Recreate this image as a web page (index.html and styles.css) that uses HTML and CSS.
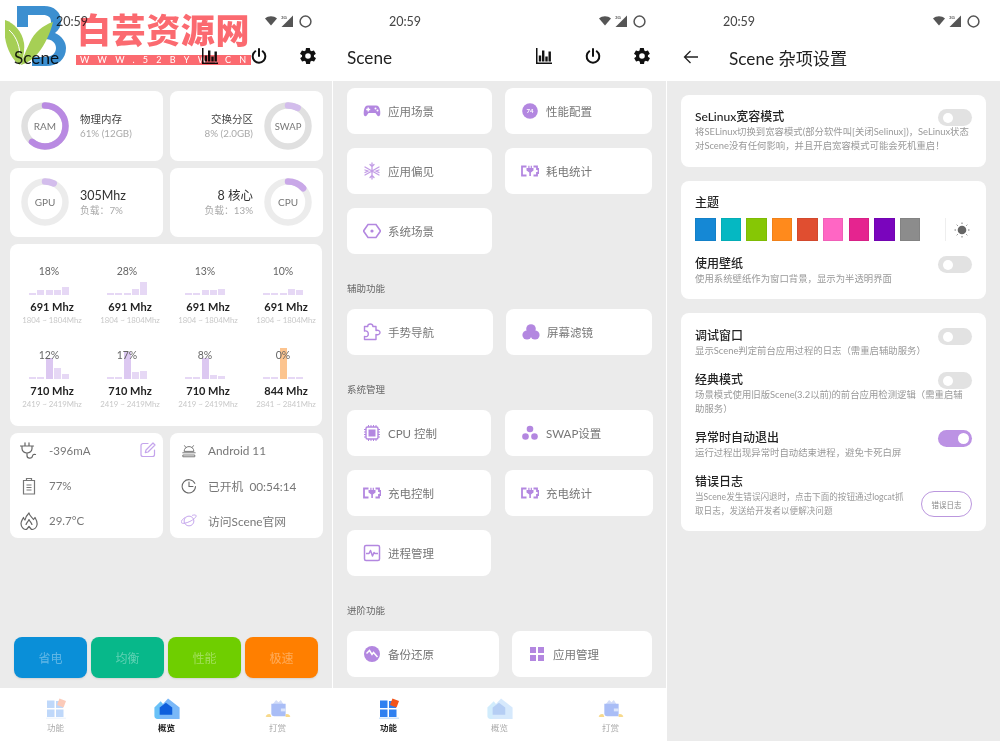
FILE: index.html
```html
<!DOCTYPE html>
<html>
  <head>
    <meta charset="utf-8">
    <title>Scene</title>
    <link rel="stylesheet" href="styles.css">
  </head>
  <body>
    <!-- shared icons -->
    <svg class="defs" width="0" height="0">
      <symbol id="i-wifi" viewBox="0 0 12 10"><path d="M0 2.6C3.4-.4 8.6-.4 12 2.6L6 9.6z" fill="#555"/></symbol>
      <symbol id="i-batt" viewBox="0 0 12 12"><circle cx="6" cy="6" r="5" fill="none" stroke="#555" stroke-width="1.4"/></symbol>
      <symbol id="i-bars" viewBox="0 0 16 16"><path d="M0 0h1.5v14.5H16V16H0z" fill="#111"/><path d="M2.8 7.5h2.4v6H2.8zM6 2.5h2.4v11H6zM9.3 8.5h2.4v5H9.3zM12.5 3.5h2.4v10h-2.4z" fill="#111"/></symbol>
      <symbol id="i-power" viewBox="0 0 16 16"><path d="M8 1v7M4.3 3.3a6.3 6.3 0 1 0 7.4 0" fill="none" stroke="#111" stroke-width="2" stroke-linecap="round"/></symbol>
      <symbol id="i-gear" viewBox="2 2 20 20"><path fill="#111" fill-rule="evenodd" d="M19.4 13a7.6 7.6 0 0 0 0-2l2.1-1.6a.5.5 0 0 0 .1-.6l-2-3.5a.5.5 0 0 0-.6-.2l-2.5 1a7.3 7.3 0 0 0-1.7-1l-.4-2.7a.5.5 0 0 0-.5-.4h-4a.5.5 0 0 0-.5.4l-.4 2.7a7.3 7.3 0 0 0-1.7 1l-2.5-1a.5.5 0 0 0-.6.2l-2 3.5a.5.5 0 0 0 .1.6L4.6 11a7.6 7.6 0 0 0 0 2l-2.1 1.6a.5.5 0 0 0-.1.6l2 3.5c.1.2.4.3.6.2l2.5-1c.5.4 1.1.7 1.7 1l.4 2.7c0 .2.2.4.5.4h4c.3 0 .5-.2.5-.4l.4-2.7c.6-.3 1.2-.6 1.7-1l2.5 1c.2.1.5 0 .6-.2l2-3.5a.5.5 0 0 0-.1-.6zM12 15.5a3.5 3.5 0 1 1 0-7 3.5 3.5 0 0 1 0 7z"/></symbol>
      <symbol id="i-charge" viewBox="0 0 18 12"><path d="M5.5 1.5H1v9h4.5M12.5 1.5H16V4h1.500v4H16v2.5h-3.5" fill="none" stroke="#b387e0" stroke-width="1.8"/><path d="M5.5 3h1.800V.8h1.200V3h1.200V.8h1.200V3h1.600v2.500L9.900 7.500V11H8.300V7.500L5.500 5.500z" fill="#b387e0"/></symbol>
      <symbol id="n-func" viewBox="0 0 20 21"><path d="M0 19.5h20V21H0z" fill="#cfe4fb"/><path d="M1 2.500h7.500V10H1zM10 3h7v7h-7zM1 11.500h7.500V19H1zM10 11.500h7.500V19H10z" fill="#2f80f0"/><rect x="12" y="1.5" width="7" height="7" transform="rotate(20 15.5 5)" fill="#f2541b"/></symbol>
      <symbol id="n-home" viewBox="0 0 24 20"><path d="M0 9l6-6 5 6v11H3a3 3 0 0 1-3-3z" fill="#69c1f7"/><path d="M5 9l8-8.500L24 9v11H5z" fill="#7ab8f8"/><path d="M5 9l6-4.500L17 9v7H5z" fill="#0f5fdc"/></symbol>
      <symbol id="n-tip" viewBox="0 0 26 22"><path d="M7 7l4-5 2.500 2.500L16 2l3 5z" fill="#d2dcf8"/><path d="M6 6h15v13H9a3 3 0 0 1-3-3z" fill="#a9bdf6"/><path d="M16 11h5v3h-5z" fill="#dce5fb"/><path d="M0 19q2-3 5-2l1 3H1zM21 17q3-1 5 2l-1 1h-4z" fill="#f7d98c"/></symbol>
    </svg>

    <div class="screens">
      <!-- overview -->
      <section class="screen">
        <div class="statusbar">
          <span class="clock">20:59</span>
          <div class="status-icons">
            <svg class="ic-wifi"><use href="#i-wifi"/></svg>
            <svg class="ic-sig" viewBox="0 0 12 12"><path d="M12 .5V12H.5z" fill="#555"/><text x="0" y="4" class="net">3G</text></svg>
            <svg class="ic-batt"><use href="#i-batt"/></svg>
          </div>
        </div>
        <header class="appbar">
          <h1 class="app-title">Scene</h1>
          <div class="app-actions">
            <svg><use href="#i-bars"/></svg>
            <svg><use href="#i-power"/></svg>
            <svg><use href="#i-gear"/></svg>
          </div>
        </header>
        <main class="content overview">
          <div class="gauges">
            <div class="card gauge">
              <svg class="ring" viewBox="0 0 48 48"><circle class="ring-track" cx="24" cy="24" r="20.5"/><circle class="ring-val" cx="24" cy="24" r="20.5" stroke-dasharray="78 129"/><text x="24" y="28">RAM</text></svg>
              <div class="gauge-text"><div class="gauge-title">物理内存</div><div class="gauge-sub">61% (12GB)</div></div>
            </div>
            <div class="card gauge gauge-rev">
              <svg class="ring" viewBox="0 0 48 48"><circle class="ring-track" cx="24" cy="24" r="20.5"/><circle class="ring-val ring-soft" cx="24" cy="24" r="20.5" stroke-dasharray="10 129"/><text x="24" y="27.5" class="small">SWAP</text></svg>
              <div class="gauge-text"><div class="gauge-title">交换分区</div><div class="gauge-sub">8% (2.0GB)</div></div>
            </div>
            <div class="card gauge">
              <svg class="ring" viewBox="0 0 48 48"><circle class="ring-track light" cx="24" cy="24" r="20.5"/><circle class="ring-val ring-soft" cx="24" cy="24" r="20.5" stroke-dasharray="9 129"/><text x="24" y="28">GPU</text></svg>
              <div class="gauge-text"><div class="gauge-big">305Mhz</div><div class="gauge-sub">负载：7%</div></div>
            </div>
            <div class="card gauge gauge-rev">
              <svg class="ring" viewBox="0 0 48 48"><circle class="ring-track light" cx="24" cy="24" r="20.5"/><circle class="ring-val ring-mid" cx="24" cy="24" r="20.5" stroke-dasharray="17 129"/><text x="24" y="28">CPU</text></svg>
              <div class="gauge-text"><div class="gauge-big">8 核心</div><div class="gauge-sub">负载：13%</div></div>
            </div>
          </div>

          <div class="card cores">
            <div class="core"><div class="core-pct">18%</div><div class="core-bars"><i style="height:2px"></i><i style="height:5px"></i><i style="height:5px"></i><i style="height:5px"></i><i style="height:8px"></i></div><div class="core-freq">691 Mhz</div><div class="core-range">1804 ~ 1804Mhz</div></div>
            <div class="core"><div class="core-pct">28%</div><div class="core-bars"><i style="height:2px"></i><i style="height:2px"></i><i style="height:2px"></i><i style="height:6px"></i><i style="height:13px"></i></div><div class="core-freq">691 Mhz</div><div class="core-range">1804 ~ 1804Mhz</div></div>
            <div class="core"><div class="core-pct">13%</div><div class="core-bars"><i style="height:2px"></i><i style="height:2px"></i><i style="height:5px"></i><i style="height:5px"></i><i style="height:6px"></i></div><div class="core-freq">691 Mhz</div><div class="core-range">1804 ~ 1804Mhz</div></div>
            <div class="core"><div class="core-pct">10%</div><div class="core-bars"><i style="height:2px"></i><i style="height:2px"></i><i style="height:2px"></i><i style="height:6px"></i><i style="height:5px"></i></div><div class="core-freq">691 Mhz</div><div class="core-range">1804 ~ 1804Mhz</div></div>
            <div class="core"><div class="core-pct">12%</div><div class="core-bars"><i style="height:2px"></i><i style="height:2px"></i><i class="hi" style="height:21px"></i><i style="height:11px"></i><i style="height:5px"></i></div><div class="core-freq">710 Mhz</div><div class="core-range">2419 ~ 2419Mhz</div></div>
            <div class="core"><div class="core-pct">17%</div><div class="core-bars"><i style="height:2px"></i><i style="height:2px"></i><i class="hi" style="height:27px"></i><i style="height:7px"></i><i style="height:8px"></i></div><div class="core-freq">710 Mhz</div><div class="core-range">2419 ~ 2419Mhz</div></div>
            <div class="core"><div class="core-pct">8%</div><div class="core-bars"><i style="height:2px"></i><i style="height:2px"></i><i class="hi" style="height:21px"></i><i style="height:4px"></i><i style="height:3px"></i></div><div class="core-freq">710 Mhz</div><div class="core-range">2419 ~ 2419Mhz</div></div>
            <div class="core"><div class="core-pct">0%</div><div class="core-bars"><i style="height:2px"></i><i style="height:2px"></i><i class="hot" style="height:31px"></i><i style="height:2px"></i><i style="height:2px"></i></div><div class="core-freq">844 Mhz</div><div class="core-range">2841 ~ 2841Mhz</div></div>
          </div>

          <div class="infos">
            <div class="card info">
              <div class="info-row">
                <svg class="info-ic" viewBox="0 0 18 18" fill="none" stroke="#666" stroke-width="1.2" stroke-linecap="round"><path d="M.5 4h13M2 4v2.500a5 4.500 0 0 0 10 0V4M5 .8V4M9 .8V4M7 11v2.500c0 3.500 5 3.500 5.500.5.300-1.500 1.500-2 3-1.500"/></svg>
                <span>-396mA</span>
                <svg class="edit" viewBox="0 0 16 16" fill="none" stroke="#c4a4ec" stroke-width="1.2" stroke-linecap="round" stroke-linejoin="round"><path d="M8 1.500H3A2 2 0 0 0 1 3.500v9a2 2 0 0 0 2 2h9.500a2 2 0 0 0 2-2V8"/><path d="M6 8l7-7 2 2-7 7-2.700.7z"/></svg>
              </div>
              <div class="info-row">
                <svg class="info-ic" viewBox="0 0 18 18" fill="none" stroke="#777" stroke-width="1.2"><path d="M3.500 3.500h11V17h-11zM6.500 3.500v-2h5v2M6.500 8h5M6.500 10.500h5M6.500 13h5"/></svg>
                <span>77%</span>
              </div>
              <div class="info-row">
                <svg class="info-ic" viewBox="0 0 18 18" fill="none" stroke="#666" stroke-width="1.2" stroke-linejoin="round"><path d="M9 1c.5 3 3 4 4.500 6.500L15 5.500c1.500 2.500 2.500 5 2 7.500-.5 2.500-3 4.500-5.500 4.500L9 14.500l-2.500 3C3.500 17.500 1 15 1 11.500c0-2.500 1.500-4 2.500-6 .2 1 .6 1.800 1.500 2.500C5.500 5 7 3 9 1z"/><path d="M6 13c0-2 2-3 3-5.500 1 2.500 3 3.500 3 5.500"/></svg>
                <span>29.7°C</span>
              </div>
            </div>
            <div class="card info info-right">
              <div class="info-row">
                <svg class="info-ic" viewBox="0 0 18 18" fill="none" stroke="#777" stroke-width="1.1" stroke-linecap="round"><path d="M4 3l1.500 2M14 3l-1.500 2M3.500 9a5.500 5 0 0 1 11 0zM2 11h14M2.500 13.500h13v2h-13z"/></svg>
                <span>Android 11</span>
              </div>
              <div class="info-row">
                <svg class="info-ic" viewBox="0 0 18 18" fill="none" stroke="#666" stroke-width="1.2" stroke-linecap="round"><path d="M15.500 6a7.500 7.500 0 1 0 .8 3.500M9 4.500v5h4.500"/></svg>
                <span>已开机&nbsp; 00:54:14</span>
              </div>
              <div class="info-row">
                <svg class="info-ic" viewBox="0 0 18 18" fill="none" stroke="#c4a4ec" stroke-width="1.1"><circle cx="9" cy="9" r="5.500"/><path d="M5 4.800C2 6.500-.5 9.500.5 11c1 1.300 5.500.5 9.500-1.500s7.500-5 7-6.500c-.4-1-2-1-4.500-.3"/></svg>
                <span>访问Scene官网</span>
              </div>
            </div>
          </div>

          <div class="modes">
            <button class="mode m-blue">省电</button>
            <button class="mode m-teal">均衡</button>
            <button class="mode m-green">性能</button>
            <button class="mode m-orange">极速</button>
          </div>
        </main>
        <nav class="tabbar">
          <div class="tab"><svg class="tab-ic faded"><use href="#n-func"/></svg><span>功能</span></div>
          <div class="tab active"><svg class="tab-ic"><use href="#n-home"/></svg><span>概览</span></div>
          <div class="tab"><svg class="tab-ic"><use href="#n-tip"/></svg><span>打赏</span></div>
        </nav>
      </section>

      <!-- functions -->
      <section class="screen">
        <div class="statusbar">
          <span class="clock">20:59</span>
          <div class="status-icons">
            <svg class="ic-wifi"><use href="#i-wifi"/></svg>
            <svg class="ic-sig" viewBox="0 0 12 12"><path d="M12 .5V12H.5z" fill="#555"/><text x="0" y="4" class="net">3G</text></svg>
            <svg class="ic-batt"><use href="#i-batt"/></svg>
          </div>
        </div>
        <header class="appbar">
          <h1 class="app-title">Scene</h1>
          <div class="app-actions">
            <svg><use href="#i-bars"/></svg>
            <svg><use href="#i-power"/></svg>
            <svg><use href="#i-gear"/></svg>
          </div>
        </header>
        <main class="content funcs">
          <div class="fn-grid cols-a">
            <div class="card fn"><svg class="fn-ic" viewBox="0 0 18 18"><path fill="#b387e0" fill-rule="evenodd" d="M5 3.500h8c2.500 0 3.500 2 4 4.500.5 3 .5 6-1.200 6.300-1.500.2-2.300-2.300-3.300-3.300h-7c-1 1-1.800 3.500-3.300 3.300C.5 14 .5 11 1 8 1.500 5.500 2.500 3.500 5 3.500zM4.500 5.500v1.300H3.200v1.400h1.300v1.300h1.400V8.200h1.300V6.800H5.900V5.500zM12.500 5.500a1 1 0 1 0 0 2 1 1 0 0 0 0-2zM14.500 7.500a1 1 0 1 0 0 2 1 1 0 0 0 0-2z"/></svg><span>应用场景</span></div>
            <div class="card fn"><svg class="fn-ic" viewBox="0 0 18 18"><circle cx="9" cy="9" r="7.800" fill="#b387e0"/><text x="9" y="11.300" class="fn-num">74</text></svg><span>性能配置</span></div>
            <div class="card fn"><svg class="fn-ic" viewBox="0 0 18 18" fill="none" stroke="#c39de6" stroke-width="1.3" stroke-linecap="round"><path d="M9 1v16M2 5l14 8M16 5L2 13M7 2.500l2 2 2-2M7 15.500l2-2 2 2M2 8l3 1-3 1.500M16 8l-3 1 3 1.500"/></svg><span>应用偏见</span></div>
            <div class="card fn"><svg class="fn-ic" viewBox="0 0 18 12"><use href="#i-charge"/></svg><span>耗电统计</span></div>
            <div class="card fn"><svg class="fn-ic" viewBox="0 0 18 18"><path d="M5 2.500h8L17.500 9 13 15.500H5L.5 9z" fill="none" stroke="#b387e0" stroke-width="1.6"/><circle cx="9" cy="9" r="1.600" fill="#b387e0"/></svg><span>系统场景</span></div>
          </div>

          <h2 class="sec-label">辅助功能</h2>
          <div class="fn-grid cols-b">
            <div class="card fn"><svg class="fn-ic" viewBox="0 0 18 18" fill="none" stroke="#b387e0" stroke-width="1.4" stroke-linejoin="round"><path d="M1.500 8V3.500h3.300c-.6-3.300 5.600-3.300 5 0H13v4c2.700-.8 4 .8 4 2s-1.300 2.800-4 2v5H1.500v-3c2.500.6 3.800-.5 3.800-2.500S4 7.500 1.500 8z"/></svg><span>手势导航</span></div>
            <div class="card fn"><svg class="fn-ic" viewBox="0 0 18 18"><circle cx="9" cy="6" r="4.800" fill="#b387e0"/><circle cx="5" cy="12" r="4.600" fill="#b387e0"/><circle cx="13" cy="12" r="4.600" fill="#b387e0"/></svg><span>屏幕滤镜</span></div>
          </div>

          <h2 class="sec-label">系统管理</h2>
          <div class="fn-grid cols-c">
            <div class="card fn"><svg class="fn-ic" viewBox="0 0 18 18" fill="none" stroke="#b387e0" stroke-width="1"><rect x="3" y="3" width="12" height="12" rx="1.5" stroke-width="1.4"/><rect x="6" y="6" width="6" height="6" fill="#b387e0"/><path d="M5.500 1v2M8 1v2M10.500 1v2M13 1v2M5.500 15v2M8 15v2M10.500 15v2M13 15v2M1 5.500h2M1 8h2M1 10.500h2M1 13h2M15 5.500h2M15 8h2M15 10.500h2M15 13h2"/></svg><span>CPU 控制</span></div>
            <div class="card fn"><svg class="fn-ic" viewBox="0 0 18 18"><circle cx="9" cy="5" r="3.300" fill="#b387e0"/><circle cx="4.500" cy="12.500" r="3.300" fill="#b387e0"/><circle cx="13.500" cy="12.500" r="3.300" fill="#b387e0"/></svg><span>SWAP设置</span></div>
            <div class="card fn"><svg class="fn-ic" viewBox="0 0 18 12"><use href="#i-charge"/></svg><span>充电控制</span></div>
            <div class="card fn"><svg class="fn-ic" viewBox="0 0 18 12"><use href="#i-charge"/></svg><span>充电统计</span></div>
            <div class="card fn"><svg class="fn-ic" viewBox="0 0 18 18" fill="none" stroke="#b387e0" stroke-width="1.5" stroke-linejoin="round"><rect x="1.5" y="1.5" width="15" height="15" rx="1.5"/><path d="M3 9.500h3l1.500-3 2 5.500 1.500-3.500 1 1h3"/></svg><span>进程管理</span></div>
          </div>

          <h2 class="sec-label">进阶功能</h2>
          <div class="fn-grid cols-d">
            <div class="card fn"><svg class="fn-ic" viewBox="0 0 18 18"><circle cx="9" cy="9" r="8" fill="#b387e0"/><path d="M3.500 8.500l3-3 2.500 4 1.500-2 4 4.500" fill="none" stroke="#fff" stroke-width="1.5"/></svg><span>备份还原</span></div>
            <div class="card fn"><svg class="fn-ic" viewBox="0 0 18 18"><path d="M2 2h6v6H2zM10 2h6v6h-6zM2 10h6v6H2zM10 10h6v6h-6z" fill="#b387e0"/></svg><span>应用管理</span></div>
          </div>
        </main>
        <nav class="tabbar">
          <div class="tab active"><svg class="tab-ic"><use href="#n-func"/></svg><span>功能</span></div>
          <div class="tab"><svg class="tab-ic faded"><use href="#n-home"/></svg><span>概览</span></div>
          <div class="tab"><svg class="tab-ic"><use href="#n-tip"/></svg><span>打赏</span></div>
        </nav>
      </section>

      <!-- settings -->
      <section class="screen">
        <div class="statusbar">
          <span class="clock">20:59</span>
          <div class="status-icons">
            <svg class="ic-wifi"><use href="#i-wifi"/></svg>
            <svg class="ic-sig" viewBox="0 0 12 12"><path d="M12 .5V12H.5z" fill="#555"/><text x="0" y="4" class="net">3G</text></svg>
            <svg class="ic-batt"><use href="#i-batt"/></svg>
          </div>
        </div>
        <header class="appbar">
          <svg class="back" viewBox="0 0 16 16" fill="none" stroke="#222" stroke-width="1.3"><path d="M15 8H1.500M7.500 2l-6 6 6 6"/></svg>
          <h1 class="app-title">Scene 杂项设置</h1>
        </header>
        <main class="content settings">
          <div class="card set-card">
            <div class="set-row">
              <div class="set-text"><h3>SeLinux宽容模式</h3><p>将SELinux切换到宽容模式(部分软件叫[关闭Selinux])，SeLinux状态对Scene没有任何影响，并且开启宽容模式可能会死机重启！</p></div>
              <div class="switch"></div>
            </div>
          </div>
          <div class="card set-card theme-card">
            <h3>主题</h3>
            <div class="swatches">
              <i class="sw sw-1"></i><i class="sw sw-2"></i><i class="sw sw-3"></i><i class="sw sw-4"></i><i class="sw sw-5"></i><i class="sw sw-6"></i><i class="sw sw-7"></i><i class="sw sw-8"></i><i class="sw sw-9"></i><i class="sw sw-10"></i>
              <svg class="sun" viewBox="0 0 16 16"><circle cx="8" cy="8" r="4.300" fill="#666"/><path d="M8 .5V2M8 14v1.500M.5 8H2M14 8h1.500M2.700 2.700l1 1M12.300 12.300l1 1M13.300 2.700l-1 1M3.700 12.300l-1 1" stroke="#777" stroke-width="1"/></svg>
            </div>
            <div class="set-row">
              <div class="set-text"><h3>使用壁纸</h3><p>使用系统壁纸作为窗口背景，显示为半透明界面</p></div>
              <div class="switch"></div>
            </div>
          </div>
          <div class="card set-card list-card">
            <div class="set-row">
              <div class="set-text"><h3>调试窗口</h3><p>显示Scene判定前台应用过程的日志（需重启辅助服务）</p></div>
              <div class="switch"></div>
            </div>
            <div class="set-row">
              <div class="set-text"><h3>经典模式</h3><p>场景模式使用旧版Scene(3.2以前)的前台应用检测逻辑（需重启辅助服务）</p></div>
              <div class="switch"></div>
            </div>
            <div class="set-row">
              <div class="set-text"><h3>异常时自动退出</h3><p>运行过程出现异常时自动结束进程，避免卡死白屏</p></div>
              <div class="switch on"></div>
            </div>
            <div class="set-row">
              <div class="set-text narrow"><h3>错误日志</h3><p>当Scene发生错误闪退时，点击下面的按钮通过logcat抓取日志，发送给开发者以便解决问题</p></div>
              <button class="log-btn">错误日志</button>
            </div>
          </div>
        </main>
      </section>
    </div>

    <!-- site watermark lying over the first screen -->
    <div class="watermark">
      <svg class="wm-logo" viewBox="5 6 62 62">
        <path d="M17 6h27c10 0 17 6 17 15 0 5-2 9-6 12 7 3 11 9 11 15 0 11-8 18-20 18H32v-9h13c7 0 11-4 11-9s-4-9-11-9h-7l6-9c4 0 7-3 7-8s-3-7-8-7H28v12H17z" fill="#3c8fd0"/>
        <path d="M5 20c9 3 17 11 19 23 1 8-1 16-4 22C9 58 2 38 5 20z" fill="#a6cf55"/>
        <path d="M21 65c2-8 5-14 9-23 4-9 13-17 23-20-3 12-8 22-14 30-5 6-11 11-18 13z" fill="#a6cf55"/>
        <path d="M9 30c6 5 10 13 11 24" fill="none" stroke="#fff" stroke-width="1"/>
      </svg>
      <div class="wm-text">
        <div class="wm-name">白芸资源网</div>
        <div class="wm-url">WWW.52BYW.CN</div>
      </div>
    </div>
  </body>
</html>
```

FILE: styles.css
```css
* {
  box-sizing: border-box;
}

body {
  margin: 0;
  background: #fff;
  font-family: "Lato", "Noto Sans CJK SC", sans-serif;
  color: #777;
}

.defs {
  position: absolute;
}

.screens {
  display: grid;
  grid-template-columns: 333px 334px 333px;
  height: 741px;
  overflow: hidden;
}

.screen {
  display: flex;
  flex-direction: column;
  height: 741px;
  background: #ebebeb;
  border-right: 1px solid #fff;
}

.screen:last-child {
  border-right: 0;
}

/* Status bar and app bar */
.statusbar {
  display: flex;
  align-items: center;
  justify-content: space-between;
  height: 41px;
  padding: 1px 20px 0 56px;
  background: #fff;
}

.clock {
  font-size: 12.5px;
  color: #444;
}

.status-icons {
  display: flex;
  align-items: center;
  gap: 4px;
}

.ic-wifi {
  width: 12px;
  height: 10px;
}

.ic-sig {
  width: 12px;
  height: 12px;
}

.net {
  font-size: 4.5px;
  font-weight: 700;
  fill: #555;
}

.ic-batt {
  width: 13px;
  height: 13px;
  margin-left: 2px;
}

.appbar {
  display: flex;
  align-items: center;
  height: 40px;
  padding: 0 16px 8px 14px;
  background: #fff;
}

.app-title {
  flex: 1;
  margin: 0;
  font-size: 17.2px;
  font-weight: 400;
  color: #222;
}

.app-actions {
  display: flex;
  align-items: center;
  gap: 33px;
  margin-top: -2px;
}

.app-actions svg {
  width: 16px;
  height: 16px;
}

.back {
  width: 16px;
  height: 16px;
  margin: 0 30px 0 2px;
}

/* Cards */
.content {
  flex: 1;
  display: flex;
  flex-direction: column;
  min-height: 0;
}

.card {
  background: #fff;
  border-radius: 8px;
}

/* Overview screen */
.overview {
  padding: 10px;
}

.gauges {
  display: grid;
  grid-template-columns: 153px 153px;
  grid-auto-rows: 69.5px;
  gap: 7px;
}

.gauge {
  display: flex;
  align-items: center;
  gap: 11px;
  padding: 0 11px;
}

.gauge-rev {
  flex-direction: row-reverse;
  text-align: right;
}

.ring {
  flex: none;
  width: 48px;
  height: 48px;
}

.ring circle {
  fill: none;
  stroke-width: 6.5;
}

.ring-track {
  stroke: #e0e0e0;
}

.ring-track.light {
  stroke: #ececec;
}

.ring-val {
  stroke: #b98ae2;
  stroke-linecap: round;
  transform: rotate(-90deg);
  transform-origin: center;
}

.ring-soft {
  stroke: #d3bdec;
}

.ring-mid {
  stroke: #c9a8e8;
}

.ring text {
  font-size: 10px;
  text-anchor: middle;
  fill: #777;
}

.ring text.small {
  font-size: 9.5px;
}

.gauge-title {
  font-size: 10.5px;
  line-height: 15px;
  color: #444;
}

.gauge-sub {
  font-size: 9.8px;
  line-height: 13px;
  color: #aaa;
}

.gauge-big {
  font-size: 12.5px;
  line-height: 17px;
  color: #333;
}

.cores {
  display: grid;
  grid-template-columns: repeat(4, 78px);
  row-gap: 21px;
  align-content: start;
  height: 182px;
  margin-top: 7px;
  padding: 19px 0 0 3px;
}

.core {
  display: flex;
  flex-direction: column;
  align-items: center;
}

.core-pct {
  position: relative;
  z-index: 1;
  margin-right: 6px;
  font-size: 10.5px;
  line-height: 16px;
  color: #666;
}

.core-bars {
  display: flex;
  align-items: flex-end;
  gap: 1.4px;
  height: 16px;
  margin-right: 6px;
}

.core-bars i {
  width: 7px;
  background: #e6d8f5;
}

.core-bars .hi {
  background: #dcc8f1;
}

.core-bars .hot {
  background: #fcc48f;
}

.core-freq {
  margin-top: 4px;
  font-size: 11px;
  font-weight: 700;
  line-height: 16px;
  color: #222;
}

.core-range {
  font-size: 7.8px;
  line-height: 11px;
  white-space: nowrap;
  color: #c8c8c8;
}

.infos {
  display: grid;
  grid-template-columns: 153px 153px;
  gap: 7px;
  margin-top: 7px;
}

.info {
  display: flex;
  flex-direction: column;
  height: 105px;
  padding: 0 7px 0 10px;
}

.info-right {
  padding-left: 11px;
}

.info-row {
  display: flex;
  align-items: center;
  gap: 11px;
  height: 35px;
  font-size: 11.5px;
  color: #777;
}

.info-right .info-row {
  font-size: 11.8px;
}

.info-ic {
  flex: none;
  width: 18px;
  height: 18px;
}

.info-right .info-ic {
  width: 16px;
  height: 16px;
}

.edit {
  width: 16px;
  height: 16px;
  margin: -2px 0 0 auto;
}

.modes {
  display: grid;
  grid-template-columns: repeat(4, 73px);
  gap: 4px;
  margin: auto 0 0 4px;
}

.mode {
  height: 41px;
  padding: 0;
  border: 0;
  border-radius: 8px;
  box-shadow: 0 1px 2px rgba(0, 0, 0, 0.1);
  font-family: inherit;
  font-size: 12px;
  color: rgba(255, 255, 255, 0.35);
}

.m-blue {
  background: #0a8fd8;
}

.m-teal {
  background: #07b88a;
}

.m-green {
  background: #6fce00;
}

.m-orange {
  background: #ff7f00;
}

/* Bottom tabs */
.tabbar {
  display: grid;
  grid-template-columns: 111px 111px 111px;
  height: 53px;
  background: #fff;
}

.tab {
  display: flex;
  flex-direction: column;
  align-items: center;
  gap: 3px;
  padding-top: 10px;
  font-size: 8.5px;
  line-height: 12px;
  color: #aaa;
}

.tab.active {
  font-weight: 700;
  color: #222;
}

.tab-ic {
  width: 26px;
  height: 21px;
}

.tab-ic.faded {
  opacity: 0.3;
}

/* Functions screen */
.funcs {
  padding: 7px 14px 0;
  overflow: hidden;
}

.fn-grid {
  display: grid;
  row-gap: 14px;
}

.cols-a {
  grid-template-columns: 145px 147px;
  column-gap: 13px;
}

.cols-b {
  grid-template-columns: 146px 146px;
  column-gap: 13px;
}

.cols-c {
  grid-template-columns: 144px 148px;
  column-gap: 14px;
}

.cols-d {
  grid-template-columns: 152px 140px;
  column-gap: 13px;
}

.fn {
  display: flex;
  align-items: center;
  gap: 8px;
  height: 46px;
  padding: 0 15px 0 16px;
  font-size: 11.5px;
  color: #777;
}

.fn-ic {
  flex: none;
  width: 18px;
  height: 18px;
}

.fn span {
  margin-left: -1px;
}

.fn-num {
  font-size: 6px;
  font-weight: 700;
  text-anchor: middle;
  fill: #fff;
}

.sec-label {
  margin: 28px 0 14px;
  font-size: 9.5px;
  font-weight: 400;
  line-height: 13px;
  color: #666;
}

/* Settings screen */
.settings {
  gap: 14px;
  padding: 14px 14px 0;
}

.set-card {
  padding: 14px;
}

.set-row {
  display: flex;
  justify-content: space-between;
}

.set-text {
  flex: 1;
  min-width: 0;
  margin-right: -34px;
}

.set-card h3 {
  margin: 0;
  font-size: 12px;
  font-weight: 500;
  line-height: 16px;
  color: #222;
}

.set-text p {
  margin: 0;
  font-size: 9.4px;
  line-height: 14px;
  color: #999;
}

.switch {
  position: relative;
  flex: none;
  width: 34px;
  height: 17px;
  border-radius: 9px;
  background: #e2e2e2;
}

.switch::after {
  content: "";
  position: absolute;
  top: 3.5px;
  left: 5px;
  width: 10px;
  height: 10px;
  border-radius: 50%;
  background: #fff;
}

.switch.on {
  background: #bc92e4;
}

.switch.on::after {
  left: auto;
  right: 3px;
  top: 3px;
  width: 11px;
  height: 11px;
}

.theme-card {
  padding-bottom: 13px;
}

.swatches {
  display: flex;
  align-items: center;
  gap: 5.1px;
  margin: 7px 0 15px;
}

.sw {
  width: 20.5px;
  height: 23px;
  border: 1px solid rgba(0, 0, 0, 0.06);
}

.sw-1 { background: #1588d5; }
.sw-2 { background: #05b8c2; }
.sw-3 { background: #86c705; }
.sw-4 { background: #ff8a1c; }
.sw-5 { background: #e04e30; }
.sw-6 { background: #ff66c4; }
.sw-7 { background: #e5248f; }
.sw-8 { background: #7a05bd; }
.sw-9 { background: #8c8c8c; }

.sw-10 {
  background: #fff;
  border: 0;
  border-right: 1px solid #eee;
}

.sun {
  width: 16px;
  height: 16px;
  margin-left: 3px;
}

.list-card {
  display: flex;
  flex-direction: column;
  gap: 14px;
  height: 218px;
  padding-top: 15px;
}

.set-text.narrow {
  margin-right: 11px;
}

.narrow p {
  font-size: 8.6px;
}

.log-btn {
  flex: none;
  align-self: flex-end;
  width: 51px;
  height: 26px;
  margin-bottom: 1px;
  padding: 0;
  border: 1px solid #bb97de;
  border-radius: 13px;
  background: #fff;
  font-family: inherit;
  font-size: 7.5px;
  color: #888;
}

/* Watermark */
.watermark {
  position: absolute;
  top: 6px;
  left: 5px;
  display: flex;
  align-items: flex-start;
  mix-blend-mode: multiply;
}

.wm-logo {
  width: 62px;
  height: 62px;
}

.wm-text {
  margin: 6px 0 0 9px;
}

.wm-name {
  padding-left: 1px;
  font-size: 34px;
  font-weight: 900;
  line-height: 36px;
  letter-spacing: 0.6px;
  white-space: nowrap;
  color: #fb6a70;
}

.wm-url {
  width: 175px;
  height: 10px;
  margin-top: 7px;
  padding-left: 4px;
  background: #fb6a70;
  font-size: 9px;
  line-height: 10px;
  letter-spacing: 8.3px;
  white-space: nowrap;
  color: #fff;
}
```
